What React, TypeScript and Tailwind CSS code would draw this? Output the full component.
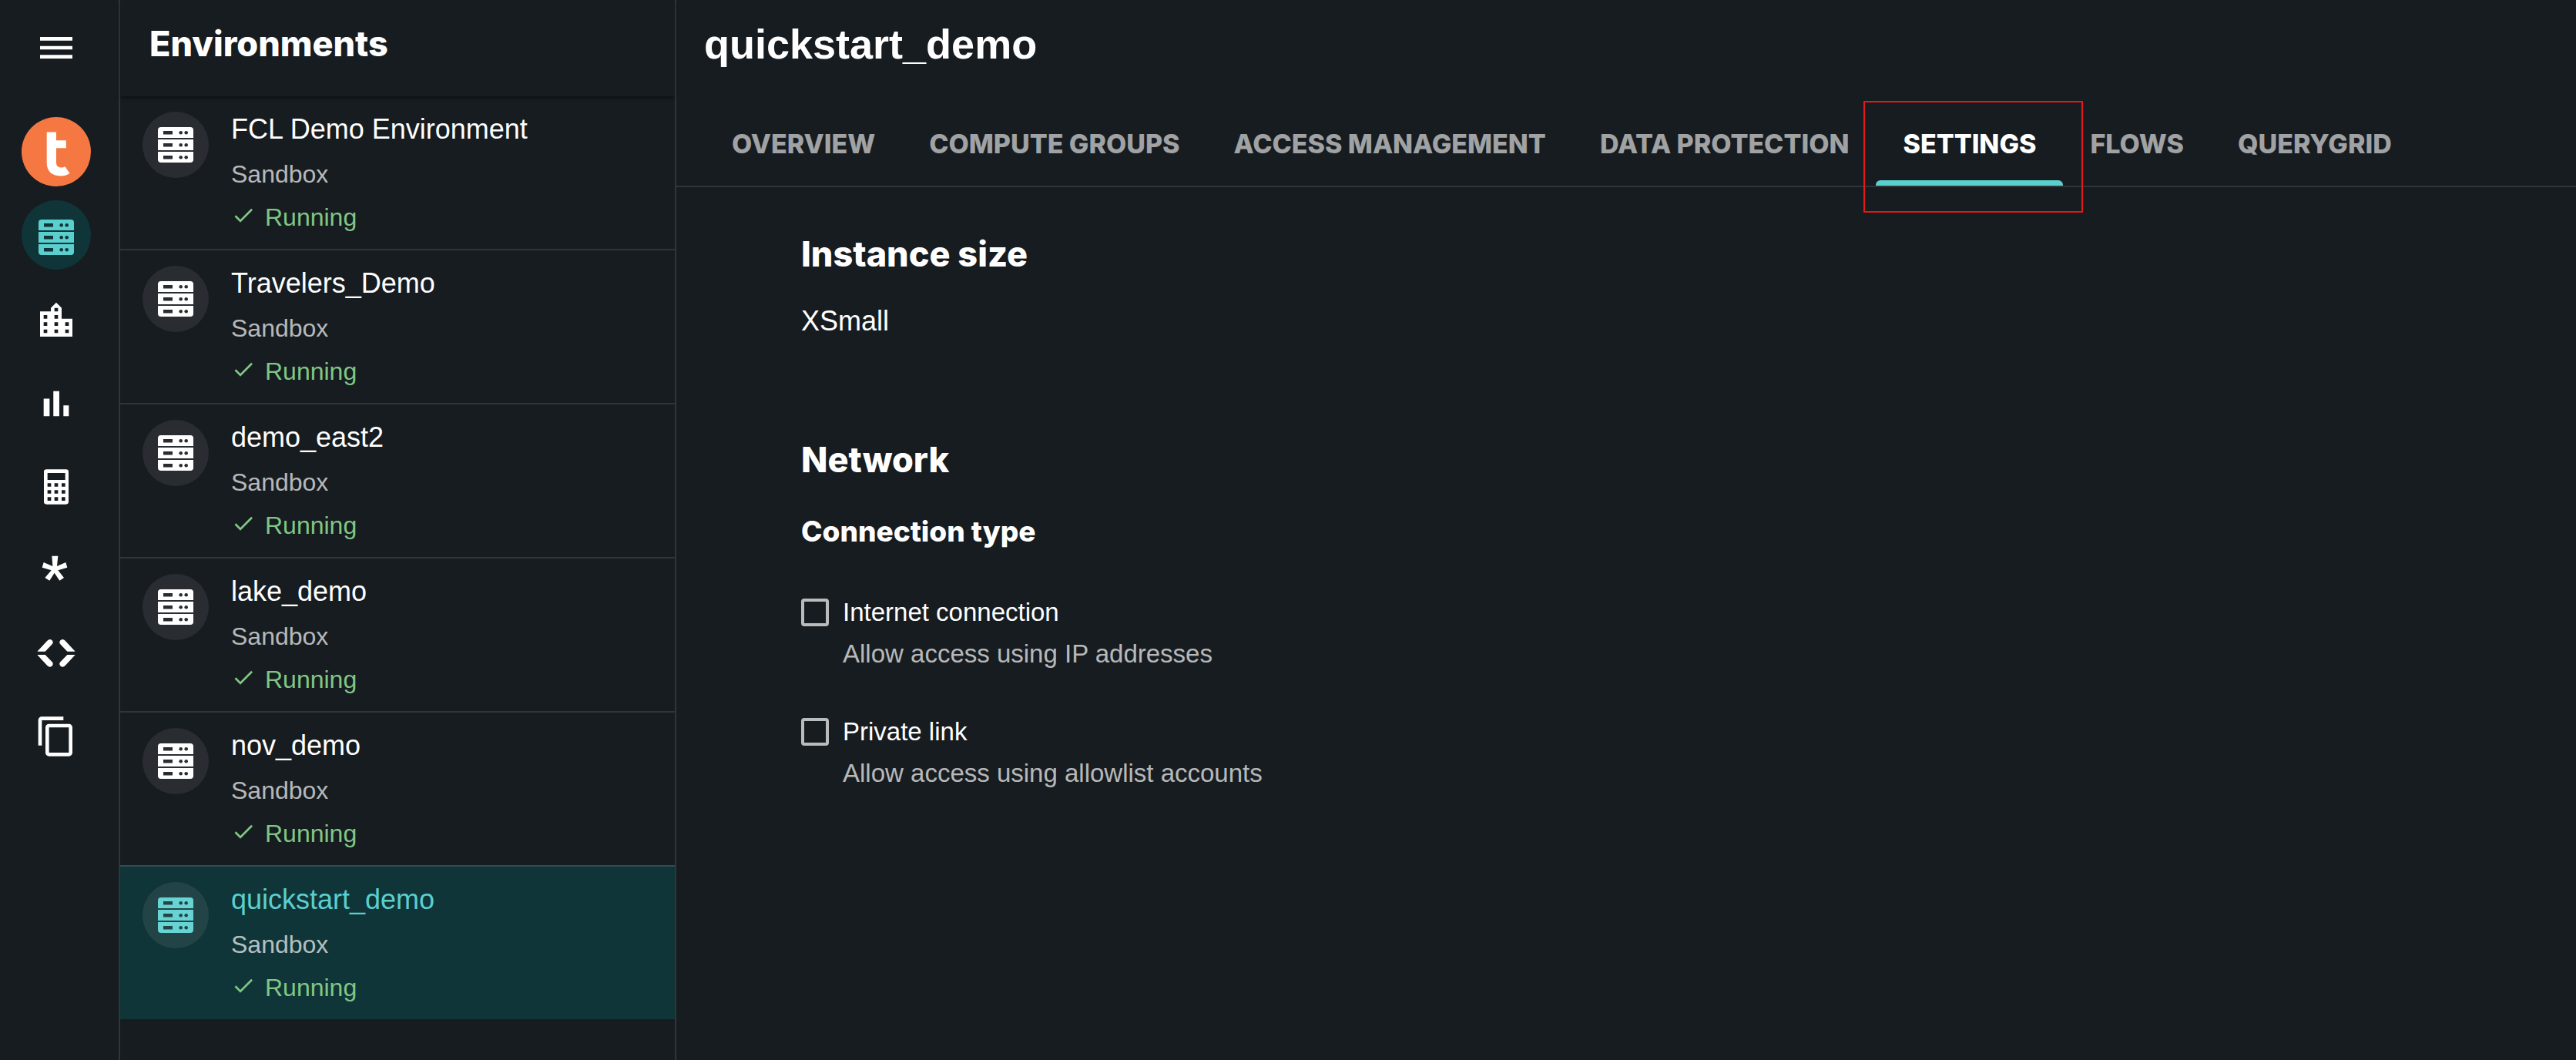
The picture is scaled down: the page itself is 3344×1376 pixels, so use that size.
import React from 'react';

const display = "font-['Inter','Liberation_Sans',sans-serif]";

type IconProps = { className?: string };

function ServerIcon({ className = '' }: IconProps) {
  const rows = [
    'M4 0h38a4 4 0 0 1 4 4v10H0V4a4 4 0 0 1 4-4z',
    'M0 16h46v14H0z',
    'M0 32h46v10a4 4 0 0 1-4 4H4a4 4 0 0 1-4-4z',
  ];
  return (
    <svg viewBox="0 0 46 46" className={'size-[46px] fill-current ' + className} aria-hidden="true">
      <defs>
        <mask id="server-holes">
          <rect width="46" height="46" fill="white" />
          {[0, 16, 32].map((y) => (
            <g key={y} fill="black">
              <rect x="7" y={y + 5} width="12" height="4.5" />
              <circle cx="29.7" cy={y + 7.2} r="2.3" />
              <circle cx="36.7" cy={y + 7.2} r="2.3" />
            </g>
          ))}
        </mask>
      </defs>
      <g mask="url(#server-holes)">
        {rows.map((d) => (
          <path key={d} d={d} />
        ))}
      </g>
    </svg>
  );
}

function Glyph({ d, viewBox = '0 0 24 24' }: { d: string; viewBox?: string }) {
  return (
    <svg viewBox={viewBox} className="size-14 fill-current" aria-hidden="true">
      <path fillRule="evenodd" d={d} />
    </svg>
  );
}

function LogoMark() {
  return (
    <svg viewBox="0 0 90 90" className="size-[90px]" aria-hidden="true">
      <circle cx="45" cy="45" r="45" fill="#f57842" />
      <path
        fill="white"
        d="M32.7 19.500H45v10.700h12.800v10H45v18.600c0 4.400 2.300 6.700 6.300 6.700 2 0 3.700-.4 5.200-1.200l6 8.700c-3.300 2.400-7.400 3.500-11.900 3.500-11.300 0-17.900-6.300-17.900-16.900z"
      />
    </svg>
  );
}

const railItems = [
  {
    label: 'Organization',
    d: 'M15 11V5l-3-3-3 3v2H3v14h18V11h-6zm-8 8H5v-2h2v2zm0-4H5v-2h2v2zm0-4H5V9h2v2zm6 8h-2v-2h2v2zm0-4h-2v-2h2v2zm0-4h-2V9h2v2zm0-4h-2V5h2v2zm6 12h-2v-2h2v2zm0-4h-2v-2h2v2z',
  },
  {
    label: 'Usage',
    d: 'M5 9.200h3.300V19H5zM10.400 5h3.300v14h-3.300zM16 13h3v6h-3z',
  },
  {
    label: 'Calculator',
    viewBox: '135 132 168 168',
    d: 'M181 148h76a10 10 0 0 1 10 10v116a10 10 0 0 1-10 10h-76a10 10 0 0 1-10-10V158a10 10 0 0 1 10-10zM185 162v27h69v-27zM185 202v13h14v-13zM212 202v13h14v-13zM240 202v13h14v-13zM185 229v13h14v-13zM212 229v13h14v-13zM240 229v13h14v-13zM185 256v14h14v-14zM212 256v14h14v-14zM240 256v14h14v-14z',
  },
  {
    label: 'Secrets',
    viewBox: '135 456 168 168',
    d: 'M202 485H226L222 525L256 510L262 530L226 541L249 570L232 581L212 551L193 581L175 570L200 541L164 530L170 510L205 525Z',
  },
  {
    label: 'Developer',
    viewBox: '135 780 168 168',
    d: 'M145 857L184 815Q193 806 202 813Q210 821 203 829L176 857ZM145 870L184 912Q193 921 202 914Q210 906 203 898L176 870ZM293 857L254 815Q245 806 236 813Q228 821 235 829L262 857ZM293 870L254 912Q245 921 236 914Q228 906 235 898L262 870Z',
  },
  {
    label: 'Copy',
    d: 'M16 1H4c-1.100 0-2 .9-2 2v14h2V3h12V1zm3 4H8c-1.100 0-2 .9-2 2v14c0 1.100.9 2 2 2h11c1.100 0 2-.9 2-2V7c0-1.100-.9-2-2-2zm0 16H8V7h11v14z',
  },
];

const environments = [
  'FCL Demo Environment',
  'Travelers_Demo',
  'demo_east2',
  'lake_demo',
  'nov_demo',
  'quickstart_demo',
];

const tabs = [
  'OVERVIEW',
  'COMPUTE GROUPS',
  'ACCESS MANAGEMENT',
  'DATA PROTECTION',
  'SETTINGS',
  'FLOWS',
  'QUERYGRID',
];

function Rail() {
  return (
    <nav aria-label="Main" className="flex w-[156px] shrink-0 flex-col items-center border-r-2 border-[#303538] pr-2 pt-[34px]">
      <button aria-label="Menu" className="mb-[62px]">
        <Glyph d="M3 18h18v-2H3v2zm0-5h18v-2H3v2zm0-7v2h18V6H3z" />
      </button>
      <div className="mb-[21px] flex flex-col gap-[18px]">
        <button aria-label="Home">
          <LogoMark />
        </button>
        <button aria-label="Environments" className="flex size-[90px] items-center justify-center rounded-full bg-[#103538] text-[#5bcfce]">
          <ServerIcon className="mt-1.5" />
        </button>
      </div>
      <div className="flex flex-col gap-[18px]">
        {railItems.map((item) => (
          <button key={item.label} aria-label={item.label} className="flex size-[90px] items-center justify-center">
            <Glyph d={item.d} viewBox={item.viewBox} />
          </button>
        ))}
      </div>
    </nav>
  );
}

function EnvironmentItem({ name, selected }: { name: string; selected: boolean }) {
  return (
    <li className={'border-t-2 first:border-t-0 ' + (selected ? 'border-[#2e4f51] bg-[#103538]' : 'border-[#303538]')}>
      <button className="flex h-[198px] w-full items-start gap-[29px] pl-[29px] pt-[13px] text-left">
        <span
          className={
            'mt-[7px] flex size-[86px] shrink-0 items-center justify-center rounded-full bg-white/8 ' +
            (selected ? 'text-[#67d3d2]' : 'text-white')
          }
        >
          <ServerIcon />
        </span>
        <span className="flex flex-col">
          <span className={'text-[36px] leading-[60px] ' + (selected ? 'text-[#5bcfce]' : 'text-white')}>{name}</span>
          <span className="text-[32px] leading-[56px] text-white/70">Sandbox</span>
          <span className="flex items-center gap-3 text-[32px] leading-[56px] text-[#81c784]">
            <svg viewBox="0 2 24 24" className="size-8 fill-current" aria-hidden="true">
              <path d="M9 16.170L4.830 12l-1.420 1.410L9 19 21 7l-1.410-1.410z" />
            </svg>
            Running
          </span>
        </span>
      </button>
    </li>
  );
}

function ConnectionOption({ id, label, hint }: { id: string; label: string; hint: string }) {
  return (
    <div className="flex gap-[18px] text-[33px] leading-[54px]">
      <input
        id={id}
        type="checkbox"
        aria-describedby={id + '-hint'}
        className="mt-[9px] size-9 shrink-0 appearance-none rounded-sm border-4 border-[#b9bbbc] checked:bg-[#5bcfce]"
      />
      <div>
        <label htmlFor={id} className="block text-white">
          {label}
        </label>
        <p id={id + '-hint'} className="text-white/70">
          {hint}
        </p>
      </div>
    </div>
  );
}

export default function App() {
  return (
    <div className="flex min-h-screen bg-[#171c20] font-['Liberation_Sans',Arial,sans-serif] text-white">
      <Rail />

      <aside className="w-[722px] shrink-0 border-r-2 border-[#303538]">
        <header className="relative h-[125px] pl-[38px] pt-6 shadow-[0_3px_4px_-1px_rgba(0,0,0,0.45)]">
          <h2 className={display + ' text-[45px] leading-[66px] font-extrabold'}>Environments</h2>
        </header>
        <ul>
          {environments.map((name) => (
            <EnvironmentItem key={name} name={name} selected={name === 'quickstart_demo'} />
          ))}
        </ul>
      </aside>

      <main className="min-w-0 flex-1">
        <h1 className="mb-[43px] pl-9 pt-6 text-[54px] leading-[66px] font-bold">quickstart_demo</h1>
        <div role="tablist" className="flex border-b-2 border-[#303538] pl-[37px]">
          {tabs.map((tab) => {
            const active = tab === 'SETTINGS';
            return (
              <button
                key={tab}
                role="tab"
                aria-selected={active}
                className={
                  display +
                  ' relative h-[108px] px-[35px] text-[34px] leading-[48px] font-extrabold whitespace-nowrap ' +
                  (active ? 'text-white' : 'text-white/60')
                }
              >
                {tab}
                {active && (
                  <>
                    <span className="absolute inset-x-0 bottom-0 h-[7px] rounded-t-md bg-[#5bcfce]" />
                    <span className="pointer-events-none absolute -top-0.5 -right-[26px] -bottom-[35px] -left-4 border-2 border-[#e81818]" />
                  </>
                )}
              </button>
            );
          })}
        </div>

        <div className="pl-[162px] pt-[54px]">
          <section>
            <h2 className={display + ' text-[45px] leading-[66px] font-extrabold'}>Instance size</h2>
            <p className="mt-[30px] text-[36px] leading-[48px]">XSmall</p>
          </section>
          <section className="mt-[123px]">
            <h2 className={display + ' text-[45px] leading-[66px] font-extrabold'}>Network</h2>
            <h3 className={display + ' mt-9 text-[37px] leading-[48px] font-extrabold'}>Connection type</h3>
            <div className="mt-[54px] flex flex-col gap-[47px]">
              <ConnectionOption id="internet" label="Internet connection" hint="Allow access using IP addresses" />
              <ConnectionOption id="private" label="Private link" hint="Allow access using allowlist accounts" />
            </div>
          </section>
        </div>
      </main>
    </div>
  );
}
